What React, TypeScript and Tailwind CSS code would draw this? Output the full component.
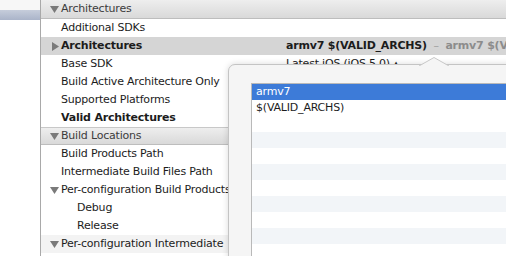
import type { ReactNode } from "react"

const font = { fontFamily: '"DejaVu Sans", "Liberation Sans", sans-serif' }

const Down = () => (
  <svg width="9" height="7" viewBox="0 0 9 7" className="shrink-0">
    <path d="M0 0 H9 L4.5 7 Z" fill="#7a7a7a" />
  </svg>
)

const Right = () => (
  <svg width="7" height="9" viewBox="0 0 7 9" className="shrink-0">
    <path d="M0 0 V9 L7 4.5 Z" fill="#7a7a7a" />
  </svg>
)

type RowProps = {
  label: ReactNode
  value?: ReactNode
  icon?: ReactNode
  bold?: boolean
  indent?: boolean
  className?: string
}

const Header = ({ label, className = "" }: { label: string; className?: string }) => (
  <div className={`flex items-center h-[18px] bg-gradient-to-b from-[#eeeeee] to-[#d9d9d9] border-b border-[#bdbdbd] text-[#3c3c3c] ${className}`}>
    <div className="w-[20px] shrink-0 flex justify-end pr-[2px]">
      <Down />
    </div>
    <span className="text-[11px] tracking-[-0.2px]">{label}</span>
  </div>
)

const Row = ({ label, value, icon, bold, indent, className = "" }: RowProps) => (
  <div className={`grid grid-cols-[245px_1fr] items-center h-[18px] text-[11px] text-[#1c1c1c] tracking-[-0.2px] ${className}`}>
    <div className="flex items-center whitespace-nowrap overflow-hidden">
      <div className="w-[20px] shrink-0 flex justify-end pr-[2px]">{icon}</div>
      <span className={`${bold ? "font-bold" : ""} ${indent ? "pl-[16px]" : ""}`}>{label}</span>
    </div>
    <div className="whitespace-nowrap overflow-hidden">{value}</div>
  </div>
)

const options = ["armv7", "$(VALID_ARCHS)", "", "", "", "", "", "", "", "", ""]

export default function App() {
  return (
    <div className="relative w-[506px] h-[256px] overflow-hidden bg-white flex" style={font}>
      <aside className="w-[40px] shrink-0 flex flex-col bg-white">
        <div className="h-[10px] bg-[#f7f7f7]" />
        <div className="h-[10px] bg-gradient-to-b from-[#c6cddb] to-[#aab4c9]" />
      </aside>

      <section className="flex-1 flex flex-col border-l border-[#a9a9a9]">
        <Header label="Architectures" className="h-[19px]" />
        <Row label="Additional SDKs" />
        <Row
          label="Architectures"
          bold
          icon={<Right />}
          className="bg-[#d5d5d5]"
          value={
            <span className="font-bold">
              armv7 $(VALID_ARCHS)
              <span className="text-[#a0a0a0] font-normal"> &nbsp;– &nbsp;</span>
              <span className="text-[#8c8c8c]">armv7 $(VA</span>
            </span>
          }
        />
        <Row label="Base SDK" value={<span>Latest iOS (iOS 5.0) ▴</span>} />
        <Row label="Build Active Architecture Only" />
        <Row label="Supported Platforms" />
        <Row label="Valid Architectures" bold />
        <Header label="Build Locations" className="border-t border-t-[#c8c8c8]" />
        <Row label="Build Products Path" />
        <Row label="Intermediate Build Files Path" />
        <Row label="Per-configuration Build Products Path" icon={<Down />} />
        <Row label="Debug" indent />
        <Row label="Release" indent />
        <Row label="Per-configuration Intermediate" icon={<Down />} className="bg-[#f3f3f3]" />
      </section>

      <div className="absolute left-[228px] top-[64px] w-[300px] h-[220px] rounded-tl-[7px] border border-[#c4c4c4] bg-[#f5f5f5] shadow-[0_0_6px_rgba(0,0,0,0.15)] pl-[22px] pt-[18px]">
        <svg width="30" height="9" viewBox="0 0 30 9" className="absolute left-[190px] -top-[8px]">
          <path d="M0 9 L15 0.5 L30 9" fill="#f5f5f5" stroke="#c8c8c8" strokeWidth="1" />
        </svg>
        <ul className="bg-white border-l border-t border-[#b9b9b9] h-full text-[11px] tracking-[-0.2px]">
          {options.map((opt, i) => (
            <li
              key={i}
              className={`h-[16px] flex items-center pl-[4px] ${
                i === 0 ? "bg-[#3d7bd8] text-white" : i % 2 === 1 && i > 2 ? "bg-[#f2f5f8] text-[#1c1c1c]" : "text-[#1c1c1c]"
              }`}
            >
              {opt}
            </li>
          ))}
        </ul>
      </div>
    </div>
  )
}
